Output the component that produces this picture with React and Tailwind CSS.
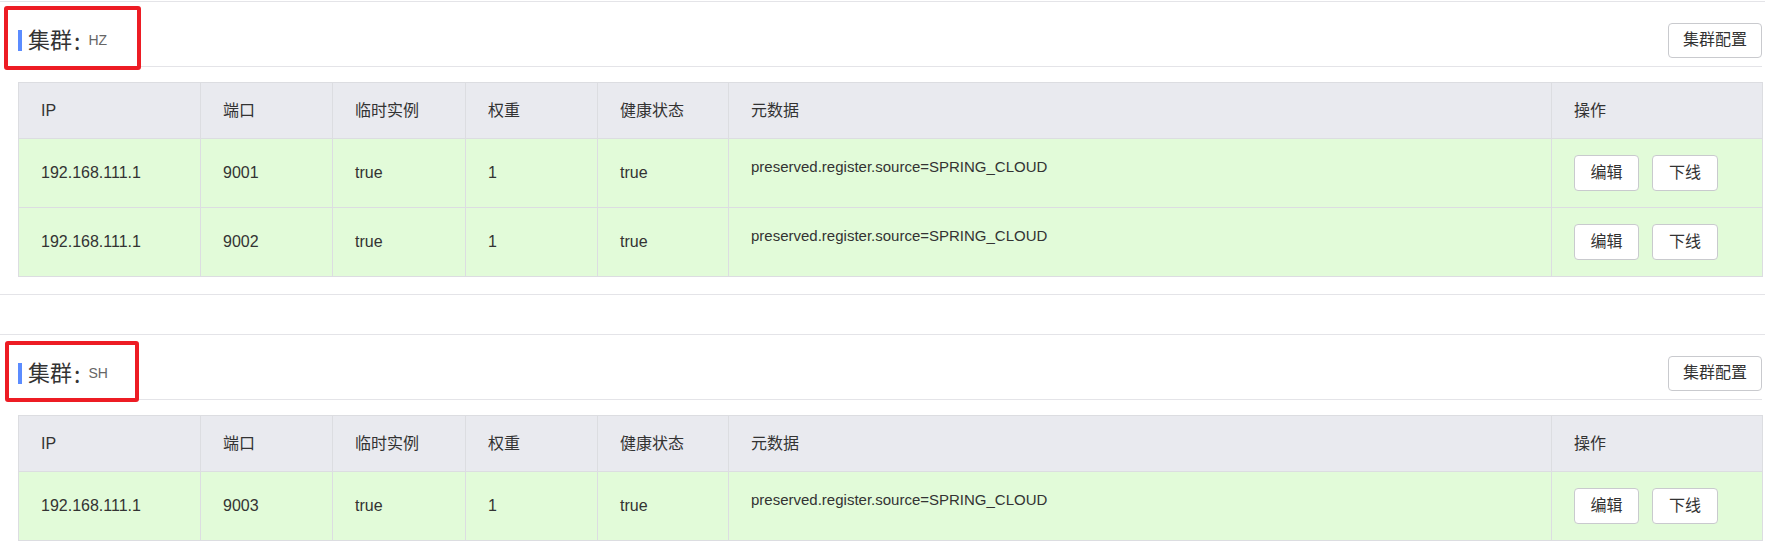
import React from 'react';

const clusters = [
  {
    name: 'HZ',
    mark: 'left-[4px] top-[4px] w-[137px] h-[64px]',
    instances: [
      { ip: '192.168.111.1', port: 9001, ephemeral: 'true', weight: 1, healthy: 'true', meta: 'preserved.register.source=SPRING_CLOUD' },
      { ip: '192.168.111.1', port: 9002, ephemeral: 'true', weight: 1, healthy: 'true', meta: 'preserved.register.source=SPRING_CLOUD' },
    ],
  },
  {
    name: 'SH',
    mark: 'left-[5px] top-[6px] w-[134px] h-[61px]',
    instances: [
      { ip: '192.168.111.1', port: 9003, ephemeral: 'true', weight: 1, healthy: 'true', meta: 'preserved.register.source=SPRING_CLOUD' },
    ],
  },
];

const columns = [
  { title: 'IP', width: 'w-[182px]' },
  { title: '端口', width: 'w-[132px]' },
  { title: '临时实例', width: 'w-[133px]' },
  { title: '权重', width: 'w-[132px]' },
  { title: '健康状态', width: 'w-[131px]' },
  { title: '元数据', width: 'w-[823px]' },
  { title: '操作', width: 'w-[211px]' },
];

function OutlineButton({ children, className = '' }) {
  return (
    <button className={`border border-[#c9cace] rounded-[4px] bg-white text-[16px] text-[#333] leading-none ${className}`}>
      {children}
    </button>
  );
}

function ClusterCard({ cluster }) {
  const cell = 'pl-[22px] border border-[#dcdde1] text-left';

  return (
    <div className="relative border-y border-[#e4e4e8] pr-[3px] pb-[17px]">
      {/* header */}
      <div className="ml-[8px] pl-[10px] pt-[20px] pb-[8px] border-b border-[#e4e4e8]">
        <div className="flex items-center justify-between h-[36px]">
          <div className="flex items-center">
            <span className="w-[4px] h-[21px] bg-[#5b8cff] mr-[6px]" />
            <span className="text-[22px] text-[#333]">集群</span>
            <span className="text-[23px] text-[#333] font-['Noto_Sans_CJK_SC',sans-serif] ml-[2px] mr-[8px]">:</span>
            <span className="text-[14px] text-[#666]">{cluster.name}</span>
          </div>
          <OutlineButton className="h-[35px] px-[14px]">集群配置</OutlineButton>
        </div>
      </div>

      {/* instances */}
      <table className="ml-[18px] mt-[15px] w-[1744px] table-fixed border-collapse text-[16px] text-[#333]">
        <colgroup>
          {columns.map((col) => (
            <col key={col.title} className={col.width} />
          ))}
        </colgroup>
        <thead>
          <tr className="bg-[#e9eaef]">
            {columns.map((col) => (
              <th key={col.title} className={`${cell} h-[56px] font-normal`}>
                {col.title}
              </th>
            ))}
          </tr>
        </thead>
        <tbody>
          {cluster.instances.map((item) => (
            <tr key={item.port} className="bg-[#e2fbd9]">
              <td className={`${cell} h-[69px]`}>{item.ip}</td>
              <td className={cell}>{item.port}</td>
              <td className={cell}>{item.ephemeral}</td>
              <td className={cell}>{item.weight}</td>
              <td className={cell}>{item.healthy}</td>
              <td className={`${cell} align-top pt-[17px] text-[15px] leading-[22px]`}>{item.meta}</td>
              <td className={cell}>
                <div className="flex items-center">
                  <OutlineButton className="h-[36px] w-[65px] mr-[13px]">编辑</OutlineButton>
                  <OutlineButton className="h-[36px] w-[66px]">下线</OutlineButton>
                </div>
              </td>
            </tr>
          ))}
        </tbody>
      </table>

      {/* annotation box */}
      <div className={`absolute ${cluster.mark} border-4 border-[#ed1c24] rounded-[3px] pointer-events-none`} />
    </div>
  );
}

export default function App() {
  return (
    <div className="w-[1765px] min-h-[546px] bg-white pt-px font-['Liberation_Sans','Noto_Sans_CJK_SC',sans-serif]">
      <div className="flex flex-col gap-[39px]">
        {clusters.map((cluster) => (
          <ClusterCard key={cluster.name} cluster={cluster} />
        ))}
      </div>
    </div>
  );
}
